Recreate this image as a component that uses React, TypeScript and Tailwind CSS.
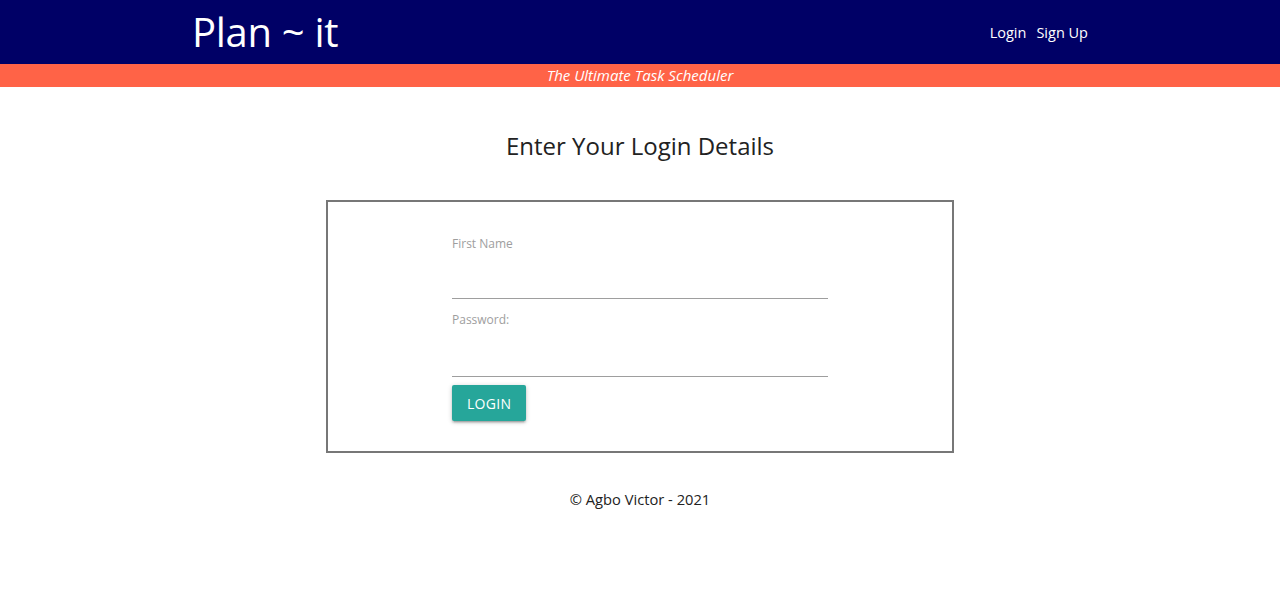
export default function App() {
  return (
    <div className="min-h-[595px] bg-white font-['Open_Sans',sans-serif] text-[#222]">
      {/* Navbar */}
      <nav className="h-16 bg-[#000066] text-white">
        <div className="mx-[192px] h-full flex items-center justify-between">
          <a href="#" className="text-[40px] leading-none tracking-[-0.3px]">
            Plan ~ it
          </a>
          <ul className="flex items-center gap-[10px] text-[14.5px] mt-[2px]">
            <li>
              <a href="#">Login</a>
            </li>
            <li>
              <a href="#">Sign Up</a>
            </li>
          </ul>
        </div>
      </nav>
      <div className="h-[23px] bg-[#ff6347] text-white text-center italic text-[15px] leading-[23px]">
        The Ultimate Task Scheduler
      </div>

      {/* Login form */}
      <h4 className="mt-[44px] text-center text-[24px] leading-[30px] text-[#222]">
        Enter Your Login Details
      </h4>
      <div className="mx-auto mt-[39px] w-[628px] h-[253px] border-2 border-[#777] flex justify-center">
        <form className="w-[376px] pt-[34px]">
          <label className="block text-[12px] text-[#9e9e9e] leading-4">First Name</label>
          <input
            type="text"
            className="block w-full h-[47px] border-b border-[#9e9e9e] outline-none"
          />
          <label className="block mt-[13px] text-[12px] text-[#9e9e9e] leading-4">Password:</label>
          <input
            type="password"
            className="block w-full h-[49px] border-b border-[#9e9e9e] outline-none"
          />
          <button
            type="button"
            className="mt-2 h-9 px-[15px] rounded-[2px] bg-[#26a69a] text-white text-[14px] tracking-[0.3px] uppercase shadow-[0_2px_2px_0_rgba(0,0,0,0.14),0_3px_1px_-2px_rgba(0,0,0,0.12),0_1px_5px_0_rgba(0,0,0,0.2)]"
          >
            Login
          </button>
        </form>
      </div>

      <footer className="mt-[35px] text-center text-[14.7px]">© Agbo Victor - 2021</footer>
    </div>
  );
}
